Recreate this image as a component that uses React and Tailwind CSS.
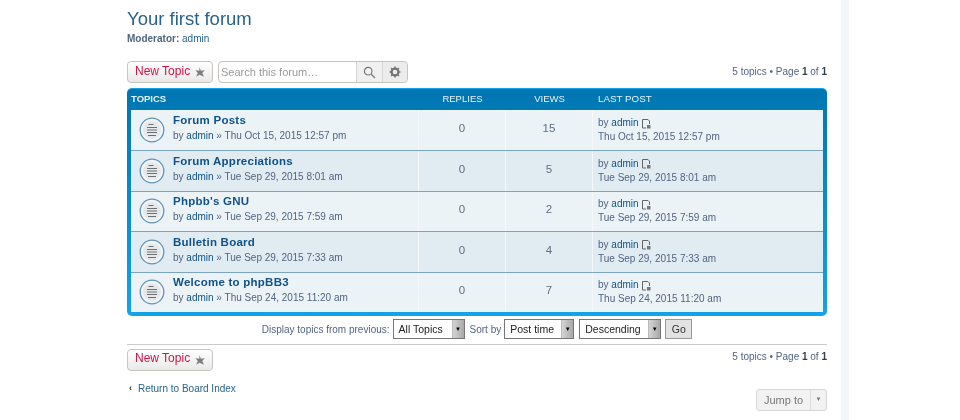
import React from 'react';

const topics = [
  { title: 'Forum Posts', date: 'Thu Oct 15, 2015 12:57 pm', views: 15 },
  { title: 'Forum Appreciations', date: 'Tue Sep 29, 2015 8:01 am', views: 5 },
  { title: "Phpbb's GNU", date: 'Tue Sep 29, 2015 7:59 am', views: 2 },
  { title: 'Bulletin Board', date: 'Tue Sep 29, 2015 7:33 am', views: 4 },
  { title: 'Welcome to phpBB3', date: 'Thu Sep 24, 2015 11:20 am', views: 7 },
];

function TopicIcon() {
  return (
    <svg width="26" height="26" viewBox="0 0 26 26" className="shrink-0">
      <circle cx="13" cy="13" r="11.8" fill="#f2f5f7" stroke="#5f93ba" strokeWidth="1.3" />
      <circle cx="13" cy="13" r="9" fill="#e6e8ea" />
      <path d="M9.5 7.5h5M8 10.5h10M8 13h10M8 15.5h10M9 18.5h8" stroke="#6b7074" strokeWidth="1.1" />
    </svg>
  );
}

function LatestIcon() {
  return (
    <svg width="9" height="10" viewBox="0 0 9 10" className="ml-[3px] inline-block">
      <path d="M.5 .5h5.5l1.5 1.5v3M.5 .5v8.5h3.5" fill="none" stroke="#666" strokeWidth="1" />
      <path d="M5 6h3.5v3.5h-3.5z" fill="#777" />
    </svg>
  );
}

function NewTopic() {
  return (
    <div className="flex h-[22px] w-[86px] items-center rounded-[4px] border border-[#c7c3bf] bg-gradient-to-b from-white to-[#e9e9e9] pl-[7px] text-[12px] text-[#d31141]">
      <span className="mt-[-3px]">New Topic</span>
      <svg width="11" height="11" viewBox="0 0 10 10" className="ml-[4px] mt-[1px]">
        <path d="M5 0l1.2 3.4 3.6-.5-2.3 2.6 1.6 3.4L5 7 1.9 8.9l1.6-3.4L1.2 2.9l3.6.5z" fill="#7d7d7d" />
      </svg>
    </div>
  );
}

function Pagination() {
  return (
    <div className="text-[10px] text-[#536482]">
      5 topics • Page <b className="text-[#323d4f]">1</b> of <b className="text-[#323d4f]">1</b>
    </div>
  );
}

function SelectBox({ label, w }) {
  return (
    <div className={`flex h-[20px] ${w} items-center justify-between border border-[#767676] bg-white pl-[5px] text-[10.5px] text-[#222]`}>
      <span>{label}</span>
      <span className="flex h-full w-[12px] items-center justify-center border-l border-[#bbb] bg-gradient-to-r from-[#d4d4d4] to-[#a8a8a8] text-[6px] text-black">▼</span>
    </div>
  );
}

function TopicRow({ topic, index }) {
  const bg = index % 2 === 0 ? 'bg-[#ecf3f7]' : 'bg-[#e1ebf2]';
  return (
    <div className={`flex h-[40.4px] border-t border-[#7ba4c0] first:border-t-0 ${bg}`}>
      <div className="flex w-[287px] items-center pl-[8px]">
        <TopicIcon />
        <div className="ml-[8px] mt-[-5px]">
          <div className="text-[11.5px] font-bold leading-[15px] tracking-[0.25px] text-[#105289]">{topic.title}</div>
          <div className="mt-[1px] text-[10px] leading-[13px] text-[#536482]">
            by <span className="text-[#105289]">admin</span> » {topic.date}
          </div>
        </div>
      </div>
      <div className="flex w-[87px] items-center justify-center border-l border-[#f5f9fb] pb-[3px] text-[11.5px] text-[#5f6f85]">0</div>
      <div className="flex w-[87px] items-center justify-center border-l border-[#f5f9fb] pb-[3px] text-[11.5px] text-[#5f6f85]">{topic.views}</div>
      <div className="flex flex-1 flex-col justify-center border-l border-[#f5f9fb] pl-[5px] text-[10px] leading-[14px] text-[#536482]">
        <div>
          by <span className="text-[#105289]">admin</span>
          <LatestIcon />
        </div>
        <div>{topic.date}</div>
      </div>
    </div>
  );
}

export default function App() {
  return (
    <div className="relative h-[420px] overflow-hidden bg-white font-['Liberation_Sans',Arial,sans-serif] blur-[0.35px]">
      <div className="flex h-full">
        <div className="ml-[118px] h-full w-[723px] bg-white pl-[9px] pr-[14px]">
          <h2 className="pt-[8px] text-[18.5px] leading-[21px] text-[#28638f]">Your first forum</h2>
          <p className="mt-[4px] text-[10px] leading-[12px] text-[#536482]">
            <b>Moderator:</b> <span className="text-[#28638f]">admin</span>
          </p>

          <div className="mt-[16px] flex items-start justify-between">
            <div className="flex items-center">
              <NewTopic />
              <div className="ml-[5px] flex h-[22px] items-stretch rounded-[4px] border border-[#c7c3bf] bg-white text-[#999]">
                <div className="flex w-[137px] items-center pl-[2px] text-[11px]">Search this forum…</div>
                <div className="flex w-[26px] items-center justify-center border-l border-[#d5d5d5] bg-[#f0f0f0]">
                  <svg width="13" height="13" viewBox="0 0 13 13">
                    <circle cx="5.2" cy="5.2" r="3.8" fill="none" stroke="#777" strokeWidth="1.2" />
                    <path d="M8 8l4 4" stroke="#888" strokeWidth="1.6" />
                  </svg>
                </div>
                <div className="flex w-[25px] items-center justify-center rounded-r-[4px] border-l border-[#d5d5d5] bg-[#ececec]">
                  <svg width="12" height="12" viewBox="0 0 12 12">
                    <circle cx="6" cy="6" r="3.4" fill="none" stroke="#777" strokeWidth="2.2" />
                    <path d="M6 .5v2M6 9.5v2M.5 6h2M9.5 6h2M2.1 2.1l1.4 1.4M8.5 8.5l1.4 1.4M2.1 9.9l1.4-1.4M8.5 3.5l1.4-1.4" stroke="#777" strokeWidth="1.6" />
                  </svg>
                </div>
              </div>
            </div>
            <div className="mt-[3px]">
              <Pagination />
            </div>
          </div>

          <div className="mt-[5px] rounded-[5px] border-t border-[#12a3eb] bg-gradient-to-b from-[#0076b1] to-[#12a3eb] px-[4px] pb-[4px]">
            <div className="flex h-[21px] items-center text-[9.5px] text-[#e6f2f8]">
              <div className="w-[287px] font-bold">TOPICS</div>
              <div className="w-[87px] pl-[2px] text-center">REPLIES</div>
              <div className="w-[87px] pl-[2px] text-center">VIEWS</div>
              <div className="flex-1 pl-[6px] text-[9.8px]">LAST POST</div>
            </div>
            <div>
              {topics.map((t, i) => (
                <TopicRow key={t.title} topic={t} index={i} />
              ))}
            </div>
          </div>

          <div className="mt-[3px] flex h-[21px] items-center justify-center gap-[3px] text-[10px] text-[#536482]">
            <span>Display topics from previous:</span>
            <SelectBox label="All Topics" w="w-[72px]" />
            <span className="ml-[2px]">Sort by</span>
            <SelectBox label="Post time" w="w-[70px]" />
            <div className="ml-[2px]">
              <SelectBox label="Descending" w="w-[82px]" />
            </div>
            <div className="ml-[1px] flex h-[20px] w-[27px] items-center justify-center border border-[#999] bg-[#e2e2e2] text-[10.5px] text-[#333]">Go</div>
          </div>

          <div className="mt-[4px] border-t border-[#ccc] pt-[4px]">
            <div className="flex items-start justify-between">
              <NewTopic />
              <Pagination />
            </div>
          </div>

          <div className="mt-[10px] flex items-start justify-between">
            <div className="ml-[2px] flex items-center text-[10px] text-[#28638f]">
              <span className="mr-[6px] text-[9px] font-bold leading-none text-[#333]">‹</span>
              Return to Board Index
            </div>
            <div className="mt-[8px] flex h-[22px] w-[71px] items-stretch rounded-[3px] border border-[#d8d8d8] bg-[#f2f2f2] text-[11px] text-[#777]">
              <div className="flex flex-1 items-center justify-center">Jump to</div>
              <div className="flex w-[16px] items-center justify-center border-l border-[#ddd] text-[6px]">▼</div>
            </div>
          </div>
        </div>
        <div className="h-full w-[8px] bg-[#f4f5f7]" />
      </div>
    </div>
  );
}
